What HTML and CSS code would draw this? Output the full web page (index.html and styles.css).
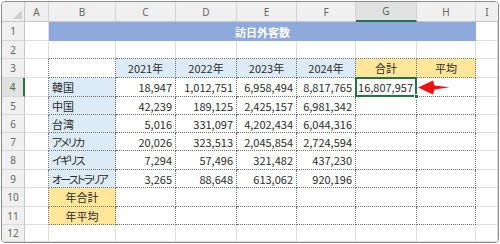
FILE: index.html
```html
<!DOCTYPE html>
<html lang="ja">
<head>
<meta charset="utf-8">
<link rel="stylesheet" href="styles.css">
</head>
<body>
<div class="frame">
  <div class="sheet">
    <div class="corner"><span class="tri"></span></div>
    <div class="ch">A</div><div class="ch">B</div><div class="ch">C</div><div class="ch">D</div><div class="ch">E</div><div class="ch">F</div><div class="ch selc">G</div><div class="ch">H</div><div class="ch last">I</div>

    <div class="rh">1</div><div class="c"></div><div class="c title">訪日外客数</div><div class="c"></div>

    <div class="rh">2</div><div class="c"></div><div class="c db"></div><div class="c db"></div><div class="c db"></div><div class="c db"></div><div class="c db"></div><div class="c db"></div><div class="c db"></div><div class="c"></div>

    <div class="rh">3</div><div class="c dr"></div><div class="c d"></div><div class="c d blue ctr">2021年</div><div class="c d blue ctr">2022年</div><div class="c d blue ctr">2023年</div><div class="c d blue ctr">2024年</div><div class="c d yel ctr">合計</div><div class="c d yel ctr">平均</div><div class="c"></div>

    <div class="rh selr">4</div><div class="c dr"></div><div class="c d blue jp">韓国</div><div class="c d num">18,947</div><div class="c d num">1,012,751</div><div class="c d num">6,958,494</div><div class="c d num">8,817,765</div><div class="c d num sel">16,807,957</div><div class="c d arrowcell"><svg class="arrow" viewBox="0 0 32 15" width="32" height="15"><path d="M0 7.5 L15 0.5 L16.5 5.5 L31.5 7.2 L16.5 9.5 L15 14.5 Z" fill="#ee1111"/></svg></div><div class="c"></div>

    <div class="rh">5</div><div class="c dr"></div><div class="c d blue jp">中国</div><div class="c d num">42,239</div><div class="c d num">189,125</div><div class="c d num">2,425,157</div><div class="c d num">6,981,342</div><div class="c d"></div><div class="c d"></div><div class="c"></div>

    <div class="rh">6</div><div class="c dr"></div><div class="c d blue jp">台湾</div><div class="c d num">5,016</div><div class="c d num">331,097</div><div class="c d num">4,202,434</div><div class="c d num">6,044,316</div><div class="c d"></div><div class="c d"></div><div class="c"></div>

    <div class="rh">7</div><div class="c dr"></div><div class="c d blue jp kana">アメリカ</div><div class="c d num">20,026</div><div class="c d num">323,513</div><div class="c d num">2,045,854</div><div class="c d num">2,724,594</div><div class="c d"></div><div class="c d"></div><div class="c"></div>

    <div class="rh">8</div><div class="c dr"></div><div class="c d blue jp kana">イギリス</div><div class="c d num">7,294</div><div class="c d num">57,496</div><div class="c d num">321,482</div><div class="c d num">437,230</div><div class="c d"></div><div class="c d"></div><div class="c"></div>

    <div class="rh">9</div><div class="c dr"></div><div class="c d blue jp kana">オーストラリア</div><div class="c d num">3,265</div><div class="c d num">88,648</div><div class="c d num">613,062</div><div class="c d num">920,196</div><div class="c d"></div><div class="c d"></div><div class="c"></div>

    <div class="rh">10</div><div class="c dr"></div><div class="c d yel ctr">年合計</div><div class="c d"></div><div class="c d"></div><div class="c d"></div><div class="c d"></div><div class="c d"></div><div class="c d"></div><div class="c"></div>

    <div class="rh">11</div><div class="c dr"></div><div class="c d yel ctr">年平均</div><div class="c d"></div><div class="c d"></div><div class="c d"></div><div class="c d"></div><div class="c d"></div><div class="c d"></div><div class="c"></div>

    <div class="rh">12</div><div class="c"></div><div class="c"></div><div class="c"></div><div class="c"></div><div class="c"></div><div class="c"></div><div class="c"></div><div class="c"></div><div class="c"></div>
  </div>
</div>
</body>
</html>
```
FILE: styles.css
```css
html, body {
  margin: 0;
  padding: 0;
  background: #ffffff;
}

.frame {
  margin: 1px 0 0 1px;
  width: 498px;
  height: 242px;
  box-sizing: border-box;
  border: 1px solid #8c8c8c;
  border-radius: 4px;
  overflow: hidden;
  background: #ffffff;
}

.sheet {
  display: grid;
  grid-template-columns: 23px 24px 67px 60px 61px 60px 59px 61px 59px 1fr;
  grid-template-rows: 20px 19px 18px 19px 19px 18px 18px 18px 19px 18px 19px 18px 1fr;
  height: 100%;
  font-family: "Noto Sans CJK JP", sans-serif;
  font-size: 11px;
  color: #2b2b2b;
}

.sheet > div {
  box-sizing: border-box;
  min-width: 0;
  display: flex;
  align-items: center;
  white-space: nowrap;
  overflow: visible;
}

.corner {
  position: relative;
  background: #f0f0f0;
  border-right: 1px solid #c6c6c6;
  border-bottom: 1px solid #c6c6c6;
}

.tri {
  position: absolute;
  right: 2px;
  bottom: 2px;
  width: 0;
  height: 0;
  border-left: 9px solid transparent;
  border-bottom: 9px solid #cfcfcf;
}

.ch {
  justify-content: center;
  background: #f0f0f0;
  border-right: 1px solid #d4d4d4;
  border-bottom: 1px solid #c6c6c6;
  font-family: "Noto Sans", sans-serif;
  font-size: 10px;
  color: #666666;
}

.ch.last {
  border-right: none;
}

.ch.selc {
  background: #e1e1e1;
  border-bottom: 2px solid #217346;
  color: #3f6f50;
}

.rh {
  justify-content: center;
  background: #f0f0f0;
  border-right: 1px solid #c6c6c6;
  border-bottom: 1px solid #d8d8d8;
  font-family: "Noto Sans", sans-serif;
  font-size: 10px;
  color: #666666;
}

.rh.selr {
  background: #e1e1e1;
  border-right: 2px solid #217346;
  color: #3f6f50;
}

.c {
  border-right: 1px solid #dedede;
  border-bottom: 1px solid #dedede;
}

.d {
  border-right: 1px dotted #707070;
  border-bottom: 1px dotted #707070;
}

.dr {
  border-right: 1px dotted #707070;
}

.db {
  border-bottom: 1px dotted #707070;
}

.title {
  grid-column: 3 / 10;
  justify-content: center;
  background: #8ea9db;
  border-right: none;
  border-bottom: none;
  color: #ffffff;
  font-weight: bold;
  font-feature-settings: "palt";
}

.blue {
  background: #ddebf7;
}

.yel {
  background: #ffe699;
}

.ctr {
  justify-content: center;
}

.jp {
  padding-left: 3px;
  font-feature-settings: "palt";
}

.kana {
  letter-spacing: -1.8px;
}

.num {
  justify-content: flex-end;
  padding-right: 3px;
}

.sel {
  position: relative;
}

.sel::after {
  content: "";
  position: absolute;
  left: -1px;
  top: -1px;
  right: -1px;
  bottom: -1px;
  border: 2px solid #217346;
  z-index: 2;
}

.sel::before {
  content: "";
  position: absolute;
  right: -3px;
  bottom: -3px;
  width: 5px;
  height: 5px;
  background: #217346;
  border: 1px solid #ffffff;
  box-sizing: border-box;
  z-index: 3;
}

.arrowcell {
  position: relative;
}

.arrow {
  position: absolute;
  left: 1px;
  top: 2px;
}
```
